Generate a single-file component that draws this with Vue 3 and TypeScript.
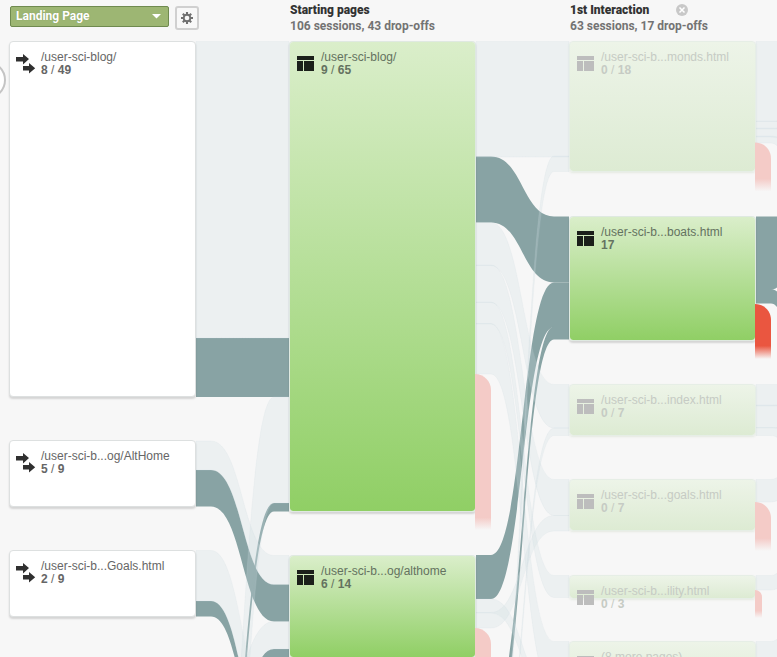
<script setup lang="ts">
interface FlowNode {
  column: number
  top: number
  height: number
  label: string
  through?: string
  total: string
  kind: 'source' | 'page'
  faded?: boolean
}
interface Ribbon {
  from: number
  left: [number, number]
  right: [number, number]
  active?: boolean
}
interface DropOff {
  x: number
  top: number
  height: number
  width: number
  active?: boolean
}

const columnX = [9, 289, 569]

const nodes: FlowNode[] = [
  { column: 0, top: 41, height: 356, label: '/user-sci-blog/', through: '8', total: '49', kind: 'source' },
  { column: 0, top: 440, height: 67, label: '/user-sci-b...og/AltHome', through: '5', total: '9', kind: 'source' },
  { column: 0, top: 550, height: 67, label: '/user-sci-b...Goals.html', through: '2', total: '9', kind: 'source' },
  { column: 1, top: 41, height: 471, label: '/user-sci-blog/', through: '9', total: '65', kind: 'page' },
  { column: 1, top: 555, height: 103, label: '/user-sci-b...og/althome', through: '6', total: '14', kind: 'page' },
  { column: 2, top: 41, height: 131, label: '/user-sci-b...monds.html', through: '0', total: '18', kind: 'page', faded: true },
  { column: 2, top: 216, height: 125, label: '/user-sci-b...boats.html', total: '17', kind: 'page' },
  { column: 2, top: 384, height: 52, label: '/user-sci-b...index.html', through: '0', total: '7', kind: 'page', faded: true },
  { column: 2, top: 479, height: 52, label: '/user-sci-b...goals.html', through: '0', total: '7', kind: 'page', faded: true },
  { column: 2, top: 575, height: 24, label: '/user-sci-b...ility.html', through: '0', total: '3', kind: 'page', faded: true },
  { column: 2, top: 641, height: 60, label: '(8 more pages)', through: '0', total: '9', kind: 'page', faded: true },
]

const ribbons: Ribbon[] = [
  { from: 196, left: [338, 397], right: [338, 397], active: true },
  { from: 196, left: [470, 506.5], right: [584.5, 621.5], active: true },
  { from: 196, left: [601, 616.5], right: [752, 768], active: true },
  { from: 196, left: [872, 912], right: [503, 511.5], active: true },
  { from: 196, left: [790, 812], right: [649, 672], active: true },
  { from: 476, left: [156.5, 222.5], right: [216.5, 282.5], active: true },
  { from: 476, left: [555, 599], right: [282.5, 327], active: true },
  { from: 476, left: [712, 740], right: [326.5, 339.5], active: true },
  { from: 756, left: [216.5, 289.5], right: [216.5, 130], active: true },
  { from: 756, left: [289, 303.5], right: [480, 560], active: true },
  { from: 196, left: [41.5, 338], right: [41.5, 338] },
  { from: 196, left: [441, 470], right: [555.5, 584.5] },
  { from: 196, left: [550.5, 601], right: [711, 752] },
  { from: 196, left: [880, 1060], right: [397, 503] },
  { from: 196, left: [720, 770], right: [621.5, 649] },
  { from: 476, left: [41.5, 157], right: [41.5, 157] },
  { from: 476, left: [780, 800], right: [156, 171.5] },
  { from: 476, left: [222.5, 265.5], right: [384.5, 428] },
  { from: 476, left: [265, 302.5], right: [479.5, 515.5] },
  { from: 476, left: [302, 324], right: [575.5, 597.5] },
  { from: 476, left: [323.5, 374], right: [641.5, 692] },
  { from: 476, left: [810, 820], right: [428, 435.5] },
  { from: 476, left: [599, 613], right: [692, 705] },
  { from: 476, left: [612.5, 628], right: [515.5, 531] },
  { from: 756, left: [41.5, 121.5], right: [41.5, 121.5] },
  { from: 756, left: [121, 129], right: [121, 135] },
  { from: 756, left: [128, 137], right: [134, 200] },
  { from: 756, left: [136, 143], right: [200, 340] },
  { from: 756, left: [384.5, 406], right: [384.5, 400] },
  { from: 756, left: [405, 428], right: [399, 440] },
  { from: 756, left: [427.5, 435.5], right: [440, 580] },
  { from: 756, left: [479.5, 502], right: [330, 400] },
  { from: 756, left: [575.5, 590], right: [400, 480] },
  { from: 756, left: [641.5, 700], right: [480, 560] },
]

const dropOffs: DropOff[] = [
  { x: 475, top: 374, height: 156, width: 16 },
  { x: 475, top: 628, height: 60, width: 16 },
  { x: 755, top: 142.5, height: 49, width: 16 },
  { x: 755, top: 304, height: 55, width: 16, active: true },
  { x: 755, top: 502, height: 49, width: 16 },
  { x: 755, top: 590, height: 28, width: 7 },
]

function ribbonPath({ from, left, right }: Ribbon): string {
  const a = from + 15
  const b = from + 78
  const m = (a + b) / 2
  const end = from + 93
  return `M${from} ${left[0]}H${a}C${m} ${left[0]} ${m} ${right[0]} ${b} ${right[0]}H${end}V${right[1]}H${b}C${m} ${right[1]} ${m} ${left[1]} ${a} ${left[1]}H${from}Z`
}

function dropPath({ x, top, height, width }: DropOff): string {
  const k = width * 0.45
  return `M${x} ${top}C${x + width - k} ${top} ${x + width} ${top + k} ${x + width} ${top + width}V${top + height}H${x}Z`
}
</script>

<template>
  <main class="flow">
    <header class="heads">
      <div class="controls">
        <button class="dimension">
          <span>Landing Page</span>
          <svg width="9" height="5" viewBox="0 0 9 5"><path d="M0 0H9L4.5 4.5Z" fill="#fff" /></svg>
        </button>
        <button class="gear">
          <svg width="14" height="14" viewBox="0 0 14 14">
            <g stroke="#707070" stroke-width="2.1">
              <path d="M7 1V13M1 7H13M2.8 2.8L11.2 11.2M11.2 2.8L2.8 11.2" />
            </g>
            <circle cx="7" cy="7" r="3.3" fill="#f8f8f8" stroke="#707070" stroke-width="1.9" />
          </svg>
        </button>
      </div>
      <div class="head">
        <strong>Starting pages</strong>
        <span>106 sessions, 43 drop-offs</span>
      </div>
      <div class="head">
        <div class="title-row">
          <strong>1st Interaction</strong>
          <svg class="close" width="12" height="12" viewBox="0 0 12 12">
            <circle cx="6" cy="6" r="6" fill="#c8c8c8" />
            <path d="M3.5 3.5L8.5 8.5M8.5 3.5L3.5 8.5" stroke="#fff" stroke-width="1.5" />
          </svg>
        </div>
        <span>63 sessions, 17 drop-offs</span>
      </div>
    </header>

    <svg class="ribbons" width="777" height="657" viewBox="0 0 777 657">
      <defs>
        <linearGradient id="drop-soft" x1="0" y1="0" x2="0" y2="1">
          <stop offset="0" stop-color="#f4cbc7" />
          <stop offset="0.74" stop-color="#f4cbc7" />
          <stop offset="1" stop-color="#f4cbc7" stop-opacity="0" />
        </linearGradient>
        <linearGradient id="drop-long" x1="0" y1="0" x2="0" y2="1">
          <stop offset="0" stop-color="#f4cbc7" />
          <stop offset="0.92" stop-color="#f4cbc7" />
          <stop offset="1" stop-color="#f4cbc7" stop-opacity="0" />
        </linearGradient>
        <linearGradient id="drop-active" x1="0" y1="0" x2="0" y2="1">
          <stop offset="0" stop-color="#ea5640" />
          <stop offset="0.76" stop-color="#ea5640" />
          <stop offset="1" stop-color="#ea5640" stop-opacity="0" />
        </linearGradient>
      </defs>
      <circle cx="-13" cy="80" r="18" fill="#fff" stroke="#c4c4c4" stroke-width="2" />
      <path v-for="(r, i) in ribbons" :key="i" :d="ribbonPath(r)" :class="r.active ? 'strong' : 'weak'" />
    </svg>

    <article
      v-for="(n, i) in nodes"
      :key="i"
      class="node"
      :class="[n.kind, { faded: n.faded }]"
      :style="{ left: columnX[n.column] + 'px', top: n.top + 'px', height: n.height + 'px' }"
    >
      <svg v-if="n.kind === 'source'" class="icon" width="20" height="20" viewBox="0 0 20 20" fill="#303030">
        <path d="M0 3H7V0L13 5L7 10.5V7.5H0Z" />
        <path d="M7 12H13V9L19.2 14.3L13 19.5V16.5H7Z" />
      </svg>
      <svg v-else class="icon" width="20" height="20" viewBox="0 0 20 20" :fill="n.faded ? '#bdbdbd' : '#1b201a'">
        <path d="M1 2H18V6H1ZM1 7H7V17H1ZM8 7H18V17H8Z" />
      </svg>
      <div class="copy">
        <div>{{ n.label }}</div>
        <div><template v-if="n.through"><b>{{ n.through }}</b> / </template><b>{{ n.total }}</b></div>
      </div>
    </article>

    <svg class="ribbons" width="777" height="657" viewBox="0 0 777 657">
      <path
        v-for="(d, i) in dropOffs"
        :key="i"
        :d="dropPath(d)"
        :fill="d.active ? 'url(#drop-active)' : d.height > 100 ? 'url(#drop-long)' : 'url(#drop-soft)'"
      />
    </svg>
  </main>
</template>

<style>
body {
  background: #f7f7f7;
}
</style>

<style scoped>
.flow {
  position: relative;
  width: 777px;
  height: 657px;
  overflow: hidden;
  background: #f7f7f7;
  font-family: 'Liberation Sans', Arial, sans-serif;
  font-size: 12px;
}
.heads {
  display: grid;
  grid-template-columns: 280px 280px 1fr;
  padding-left: 10px;
  font-family: Roboto, sans-serif;
  font-weight: 700;
}
.controls {
  display: flex;
  gap: 6px;
  padding-top: 6px;
}
.dimension {
  display: flex;
  align-items: center;
  justify-content: space-between;
  box-sizing: border-box;
  width: 159px;
  height: 21px;
  padding: 0 7px 1px 5px;
  border: 1px solid #6f8a4f;
  border-radius: 2px;
  background: #9db673;
  color: #fff;
  font: inherit;
  font-size: 12px;
  text-shadow: 0 0 1px #7f965a;
}
.gear {
  display: flex;
  align-items: center;
  justify-content: center;
  box-sizing: border-box;
  width: 24px;
  height: 24px;
  padding: 0;
  border: 2px solid #d0d0d0;
  border-radius: 3px;
  background: #f8f8f8;
}
.head {
  display: flex;
  flex-direction: column;
  padding-top: 2px;
  line-height: 16px;
  color: #737373;
}
.head strong {
  color: #333;
}
.title-row {
  display: flex;
  align-items: center;
  gap: 27px;
}
.ribbons {
  position: absolute;
  left: 0;
  top: 0;
}
.strong {
  fill: #88a3a4;
}
.weak {
  fill: rgba(203, 219, 223, 0.25);
  stroke: rgba(203, 219, 223, 0.16);
  stroke-width: 1;
}
.node {
  position: absolute;
  box-sizing: border-box;
  width: 187px;
  display: flex;
  gap: 5px;
  padding: 9px 0 0 6px;
  border: 1px solid #dde0e0;
  border-radius: 4px;
  box-shadow: 0 2px 2px rgba(0, 0, 0, 0.14);
  color: #666;
}
.source {
  background: #fff;
}
.page {
  background: linear-gradient(#daeeca, #90cf65) padding-box;
  border-color: rgba(215, 228, 218, 0.75);
}
.page .copy {
  color: #647260;
}
.faded {
  background: linear-gradient(#edf4e8, #ddebd3) padding-box;
  border-color: #e6eee6;
  box-shadow: 0 1px 2px rgba(190, 205, 180, 0.3);
}
.faded .copy {
  color: #c6cbc4;
}
.icon {
  flex: none;
  margin-top: 3px;
}
.copy {
  line-height: 13px;
  white-space: nowrap;
}
</style>
